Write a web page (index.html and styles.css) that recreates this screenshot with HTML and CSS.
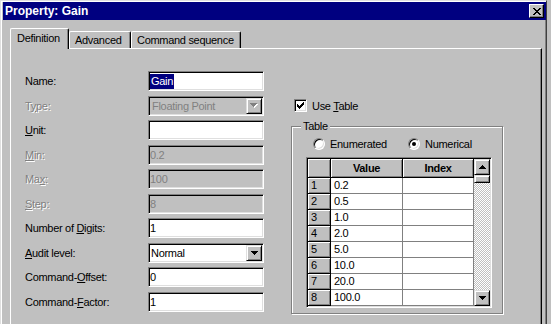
FILE: index.html
```html
<!DOCTYPE html>
<html lang="en">
<head>
    <meta charset="UTF-8">
    <title>Property: Gain</title>
    <link rel="stylesheet" href="styles.css">
</head>
<body>
    <div class="window">
        <div class="titlebar">
            <span class="title">Property: Gain</span>
            <span class="close">
                <svg width="8" height="7" viewBox="0 0 8 7">
                    <g fill="#000">
                        <rect x="0" y="0" width="2" height="1"/><rect x="6" y="0" width="2" height="1"/>
                        <rect x="1" y="1" width="2" height="1"/><rect x="5" y="1" width="2" height="1"/>
                        <rect x="2" y="2" width="4" height="1"/>
                        <rect x="3" y="3" width="2" height="1"/>
                        <rect x="2" y="4" width="4" height="1"/>
                        <rect x="1" y="5" width="2" height="1"/><rect x="5" y="5" width="2" height="1"/>
                        <rect x="0" y="6" width="2" height="1"/><rect x="6" y="6" width="2" height="1"/>
                    </g>
                </svg>
            </span>
        </div>

        <div class="tabs">
            <div class="tab active">Definition</div>
            <div class="tab tab-adv">Advanced</div>
            <div class="tab tab-cmd">Command sequence</div>
        </div>

        <div class="page">
            <div class="form">
                <label>Name:</label>
                <div class="edit"><span class="sel">Gain</span></div>

                <label class="off">T<u>y</u>pe:</label>
                <div class="edit combo disabled">
                    <span class="combo-text">Floating Point</span>
                    <span class="drop">
                        <svg width="8" height="5" viewBox="0 0 8 5"><path d="M1 1h7v1h-1v1h-1v1h-1v1h-1v-1h-1v-1h-1v-1h-1z" fill="#fff"/><path d="M0 0h7v1h-1v1h-1v1h-1v1h-1v-1h-1v-1h-1v-1h-1z" fill="#808080"/></svg>
                    </span>
                </div>

                <label><u>U</u>nit:</label>
                <div class="edit"></div>

                <label class="off"><u>M</u>in:</label>
                <div class="edit disabled">0.2</div>

                <label class="off">Ma<u>x</u>:</label>
                <div class="edit disabled">100</div>

                <label class="off"><u>S</u>tep:</label>
                <div class="edit disabled">8</div>

                <label>Number of <u>D</u>igits:</label>
                <div class="edit">1</div>

                <label><u>A</u>udit level:</label>
                <div class="edit combo">
                    <span class="combo-text">Normal</span>
                    <span class="drop">
                        <svg width="7" height="4" viewBox="0 0 7 4"><path d="M0 0h7v1h-1v1h-1v1h-1v1h-1v-1h-1v-1h-1v-1h-1z" fill="#000"/></svg>
                    </span>
                </div>

                <label>Command-<u>O</u>ffset:</label>
                <div class="edit">0</div>

                <label>Command-<u>F</u>actor:</label>
                <div class="edit">1</div>
            </div>

            <div class="side">
                <div class="check-row">
                    <span class="checkbox">
                        <svg width="7" height="7" viewBox="0 0 7 7">
                            <g fill="#000">
                                <rect x="6" y="0" width="1" height="1"/>
                                <rect x="5" y="1" width="2" height="1"/>
                                <rect x="0" y="2" width="1" height="1"/><rect x="4" y="2" width="3" height="1"/>
                                <rect x="0" y="3" width="2" height="1"/><rect x="3" y="3" width="3" height="1"/>
                                <rect x="0" y="4" width="5" height="1"/>
                                <rect x="1" y="5" width="3" height="1"/>
                                <rect x="2" y="6" width="1" height="1"/>
                            </g>
                        </svg>
                    </span>
                    <span>Use <u>T</u>able</span>
                </div>

                <fieldset class="group">
                    <legend>Table</legend>
                    <div class="radios">
                        <div class="radio-item first"><span class="radio"></span>Enumerated</div>
                        <div class="radio-item"><span class="radio on"></span>Numerical</div>
                    </div>

                    <div class="grid">
                        <div class="hd"></div>
                        <div class="hd">Value</div>
                        <div class="hd">Index</div>
                        <div class="scroll">
                            <span class="raised sbtn">
                                <svg width="7" height="4" viewBox="0 0 7 4"><path d="M3 0h1v1h1v1h1v1h1v1h-7v-1h1v-1h1v-1h1z" fill="#000"/></svg>
                            </span>
                            <span class="raised thumb"></span>
                            <span class="track"></span>
                            <span class="raised sbtn">
                                <svg width="7" height="4" viewBox="0 0 7 4"><path d="M0 0h7v1h-1v1h-1v1h-1v1h-1v-1h-1v-1h-1v-1h-1z" fill="#000"/></svg>
                            </span>
                        </div>

                        <div class="rh">1</div><div class="cell">0.2</div><div class="cell"></div>
                        <div class="rh">2</div><div class="cell">0.5</div><div class="cell"></div>
                        <div class="rh">3</div><div class="cell">1.0</div><div class="cell"></div>
                        <div class="rh">4</div><div class="cell">2.0</div><div class="cell"></div>
                        <div class="rh">5</div><div class="cell">5.0</div><div class="cell"></div>
                        <div class="rh">6</div><div class="cell">10.0</div><div class="cell"></div>
                        <div class="rh">7</div><div class="cell">20.0</div><div class="cell"></div>
                        <div class="rh">8</div><div class="cell">100.0</div><div class="cell"></div>
                    </div>
                </fieldset>
            </div>
        </div>
    </div>
</body>
</html>
```

FILE: styles.css
```css
* {
    box-sizing: border-box;
}
body {
    margin: 0;
    height: 324px;
    overflow: hidden;
    background-color: #c0c0c0;
    font-family: "Liberation Sans", Arial, sans-serif;
    font-size: 11px;
    letter-spacing: -0.3px;
    color: #000;
}
.window {
    width: 547px;
    height: 360px;
    background-color: #c0c0c0;
    border: 1px solid;
    border-color: #dfdfdf #404040 #404040 #dfdfdf;
    box-shadow: inset 1px 1px #fff, inset -1px -1px #808080;
    padding: 1px 0 0 2px;
}

/* title bar */
.titlebar {
    height: 18px;
    background-color: #000080;
    color: #fff;
    display: flex;
    align-items: center;
    justify-content: space-between;
    padding: 0 2px 0 2px;
}
.title {
    font-weight: bold;
    font-size: 12px;
    letter-spacing: 0;
}
.close {
    width: 15px;
    height: 14px;
    display: flex;
    align-items: center;
    justify-content: center;
    background-color: #c0c0c0;
    border: 1px solid;
    border-color: #fff #000 #000 #fff;
    box-shadow: inset -1px -1px #808080;
}

/* tabs */
.tabs {
    display: flex;
    align-items: flex-end;
    height: 20px;
    margin: 8px 0 0 7px;
}
.tab {
    height: 17px;
    border: 1px solid #fff;
    border-bottom: 0;
    border-right-color: #000;
    border-radius: 2px 2px 0 0;
    box-shadow: inset -1px 0 #808080;
    background-color: #c0c0c0;
    padding: 2px 0 0 5px;
    line-height: 13px;
}
.tab.active {
    position: relative;
    z-index: 1;
    width: 59px;
    height: 21px;
    margin-bottom: -1px;
    padding: 3px 0 0 6px;
}
.tab-adv {
    width: 62px;
}
.tab-cmd {
    width: 110px;
}

/* page */
.page {
    display: flex;
    align-items: flex-start;
    width: 532px;
    height: 310px;
    margin-left: 7px;
    border: 1px solid #fff;
    border-right-color: #000;
    border-bottom-color: #000;
    box-shadow: inset -1px -1px #808080;
    padding: 22px 0 0 14px;
}
.form {
    display: grid;
    grid-template-columns: 123px 116px;
    grid-auto-rows: 20px;
    row-gap: 4.5px;
    align-items: center;
}
.off {
    color: #808080;
    text-shadow: 1px 1px #fff;
}
.edit {
    height: 20px;
    background-color: #fff;
    border: 1px solid;
    border-color: #808080 #fff #fff #808080;
    box-shadow: inset 1px 1px #000, inset -1px -1px #dfdfdf;
    padding: 1px 1px 1px 1px;
    line-height: 16px;
    white-space: nowrap;
}
.edit.disabled {
    background-color: #c0c0c0;
    color: #808080;
}
.sel {
    display: inline-block;
    background-color: #000080;
    color: #fff;
    line-height: 15px;
    padding: 0 1px;
}
.combo {
    display: flex;
}
.combo-text {
    flex: 1;
    padding-left: 1px;
}
.combo.disabled .combo-text {
    padding-left: 2px;
}
.drop,
.raised {
    display: flex;
    align-items: center;
    justify-content: center;
    background-color: #c0c0c0;
    border: 1px solid;
    border-color: #dfdfdf #000 #000 #dfdfdf;
    box-shadow: inset 1px 1px #fff, inset -1px -1px #808080;
}
.drop {
    width: 16px;
    height: 16px;
}

/* right side */
.side {
    margin-left: 27px;
    padding-top: 28px;
}
.check-row {
    display: flex;
    align-items: center;
    gap: 5px;
    height: 13px;
    margin-left: 3px;
}
.checkbox {
    width: 13px;
    height: 13px;
    background-color: #fff;
    border: 1px solid;
    border-color: #808080 #fff #fff #808080;
    box-shadow: inset 1px 1px #000, inset -1px -1px #dfdfdf;
    padding: 2px;
    display: flex;
}
.group {
    width: 212px;
    margin: 8px 0 0;
    padding: 0 0 5px 14px;
    border: 1px solid #808080;
    box-shadow: inset 1px 1px #fff, 1px 1px #fff;
}
.group legend {
    padding: 0 2px;
    margin-left: -5px;
    line-height: 13px;
    background-color: #c0c0c0;
}
.radios {
    display: flex;
    align-items: center;
    height: 14px;
    margin: 4px 0 0 7px;
}
.radio-item {
    display: flex;
    align-items: center;
    gap: 5px;
}
.radio-item.first {
    width: 95px;
}
.radio {
    width: 12px;
    height: 12px;
    border-radius: 50%;
    background-color: #fff;
    border: 1px solid;
    border-color: #808080 #fff #fff #808080;
    box-shadow: inset 1px 1px #000, inset -1px -1px #dfdfdf;
    display: flex;
    align-items: center;
    justify-content: center;
}
.radio.on::after {
    content: "";
    width: 4px;
    height: 4px;
    border-radius: 50%;
    background-color: #000;
}

/* grid */
.grid {
    display: grid;
    grid-template-columns: 23px 72px 71px 16px;
    grid-template-rows: 19px repeat(8, 16px);
    width: 186px;
    margin-top: 6px;
    border: 1px solid;
    border-color: #808080 #fff #fff #808080;
    box-shadow: inset 1px 1px #000, inset -1px -1px #dfdfdf;
    padding: 1px;
    background-color: #c0c0c0;
}
.hd,
.rh {
    background-color: #c0c0c0;
    border-right: 1px solid #000;
    border-bottom: 1px solid #000;
    box-shadow: inset 1px 1px #fff, inset -1px -1px #808080;
}
.hd {
    font-weight: bold;
    text-align: center;
    line-height: 18px;
}
.rh {
    padding-left: 3px;
    line-height: 15px;
}
.cell {
    background-color: #fff;
    border-right: 1px solid #808080;
    border-bottom: 1px solid #808080;
    padding-left: 3px;
    line-height: 15px;
}
.scroll {
    grid-column: 4;
    grid-row: 1 / -1;
    display: flex;
    flex-direction: column;
    background: repeating-conic-gradient(#fff 0 25%, #c0c0c0 0 50%) 0 0 / 2px 2px;
}
.sbtn {
    height: 16px;
}
.thumb {
    height: 8px;
}
.track {
    flex: 1;
}
```
